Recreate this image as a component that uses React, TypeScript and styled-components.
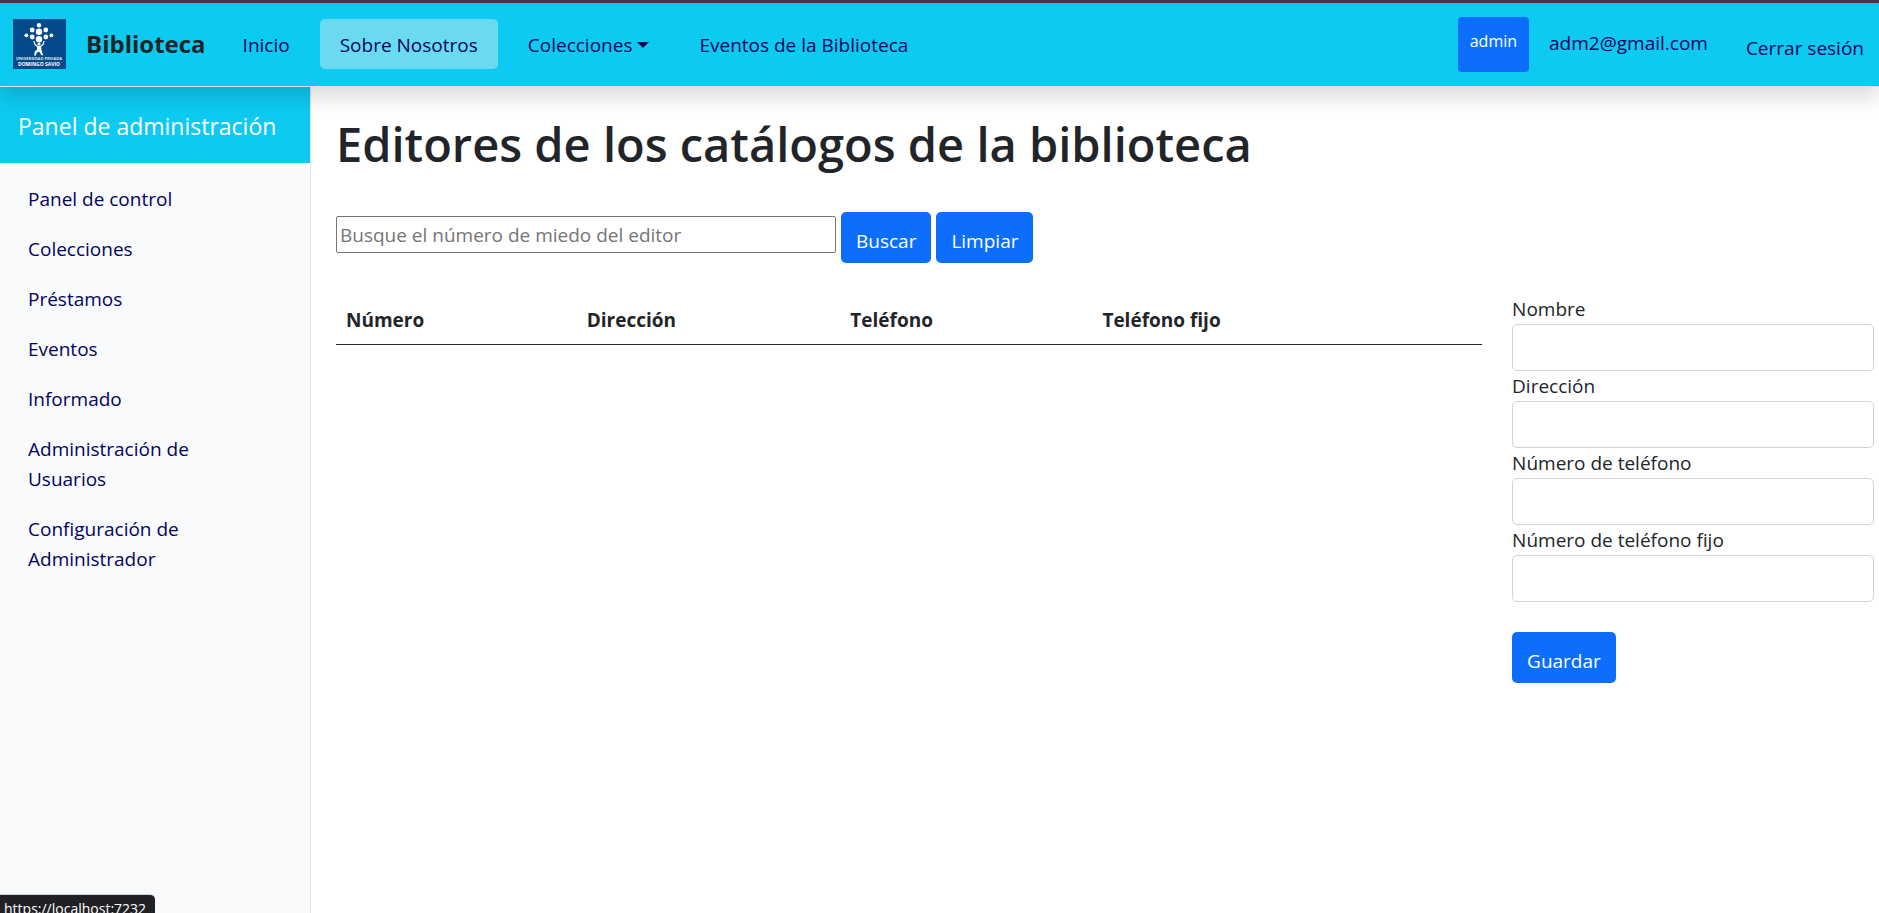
import React from "react";
import styled, { createGlobalStyle, css } from "styled-components";

const GlobalStyle = createGlobalStyle`
  *, *::before, *::after { box-sizing: border-box; }
  body {
    margin: 0;
    background: #fff;
    color: #212529;
    font: 400 19px/30px "Segoe UI", "Open Sans", "Noto Sans", sans-serif;
  }
  input, button { font: inherit; }
`;

const Page = styled.div`
  display: flex;
  flex-direction: column;
  min-height: 100vh;
`;

const TopBar = styled.header`
  position: relative;
  z-index: 1;
  display: flex;
  align-items: center;
  justify-content: space-between;
  height: 87px;
  padding: 0 15px 1px 13px;
  border-top: 3px solid #3b3c40;
  border-bottom: 1px solid #dee2e6;
  background: #0dcaf0;
  box-shadow: 0 10px 20px rgba(0, 0, 0, 0.15);
`;

const Brand = styled.a`
  display: flex;
  align-items: center;
  gap: 20px;
  margin-right: 7px;
  color: #212529;
  font-size: 24px;
  font-weight: 700;
  text-decoration: none;
`;

const TopNav = styled.nav`
  display: flex;
  align-items: center;
  gap: 10px;
`;

const NavLink = styled.a<{ $active?: boolean }>`
  display: flex;
  align-items: center;
  gap: 5px;
  padding: 11px 20px 9px;
  border-radius: 5px;
  color: #03045e;
  text-decoration: none;
  white-space: nowrap;
  ${(p) => p.$active && css`background: #6adaf0;`}
`;

const Caret = styled.span`
  border-top: 6px solid currentColor;
  border-left: 6px solid transparent;
  border-right: 6px solid transparent;
`;

const Account = styled.div`
  display: flex;
  align-items: center;
  gap: 20px;
`;

const RoleButton = styled.button`
  height: 55px;
  padding: 0 12px 7px;
  border: 0;
  border-radius: 4px;
  background: #0d6efd;
  color: #fff;
  font-size: 16px;
`;

const AccountLink = styled.a<{ $low?: boolean }>`
  padding: ${(p) => (p.$low ? "8px 0 0 18px" : "0 0 2px")};
  color: #03045e;
  text-decoration: none;
`;

const Body = styled.div`
  display: flex;
  flex: 1;
`;

const Sidebar = styled.aside`
  flex: 0 0 311px;
  border-right: 1px solid #dee2e6;
  background: #f8fafc;
`;

const SidebarTitle = styled.div`
  padding: 24px 18px 22px;
  background: #0dcaf0;
  color: #fff;
  font-size: 23px;
`;

const SidebarNav = styled.nav`
  display: flex;
  flex-direction: column;
  width: 240px;
  padding: 11px 0 0 28px;
`;

const SidebarLink = styled.a`
  padding: 10px 0;
  color: #03045e;
  text-decoration: none;
`;

const Main = styled.main`
  flex: 1;
  min-width: 0;
  padding: 27px 5px 0 25px;
`;

const Title = styled.h1`
  margin: 0 0 38px;
  font-size: 47px;
  font-weight: 600;
  line-height: 60px;
`;

const SearchForm = styled.form`
  display: flex;
  align-items: center;
  gap: 5px;
  margin-bottom: 31px;
`;

const SearchInput = styled.input`
  width: 500px;
  height: 37px;
  margin-bottom: 6px;
  padding: 0 3px;
  border: 1px solid #767676;
  border-radius: 2px;
  &::placeholder { color: #757575; opacity: 1; }
`;

const PrimaryButton = styled.button`
  height: 51px;
  padding: 7px 15px 0;
  border: 0;
  border-radius: 5px;
  background: #0d6efd;
  color: #fff;
`;

const Columns = styled.div`
  display: grid;
  grid-template-columns: minmax(0, 19fr) minmax(0, 6fr);
  gap: 30px;
  align-items: start;
`;

const Table = styled.table`
  width: 100%;
  table-layout: fixed;
  border-collapse: collapse;
`;

const Th = styled.th<{ $share: number }>`
  width: ${(p) => p.$share}%;
  padding: 11px 10px 9px;
  border-bottom: 1px solid #212529;
  font-weight: 700;
  text-align: left;
`;

const EditorForm = styled.form`
  display: flex;
  flex-direction: column;
  align-items: flex-start;
`;

const Field = styled.label`
  display: block;
  width: 100%;
`;

const FieldInput = styled.input`
  display: block;
  width: 100%;
  height: 47px;
  padding: 7px 15px;
  border: 1px solid #ced4da;
  border-radius: 5px;
`;

const Actions = styled.div`
  margin-top: 30px;
`;

const LinkStatus = styled.div`
  position: fixed;
  left: 0;
  bottom: 0;
  z-index: 2;
  height: 19px;
  padding: 0 9px 0 4px;
  overflow: hidden;
  border-top: 1px solid #d0d3d8;
  border-radius: 0 5px 0 0;
  background: #202124;
  color: #fff;
  font-size: 14px;
  line-height: 27px;
`;

const Logo = () => (
  <svg width="53" height="50" viewBox="0 0 53 50" role="img" aria-label="Universidad Privada Domingo Savio">
    <rect width="53" height="50" fill="#044a8b" />
    <g fill="#fff">
      <circle cx="26" cy="6.3" r="2.2" />
      <circle cx="19.2" cy="11" r="2.4" />
      <circle cx="26" cy="12.8" r="3.2" />
      <circle cx="32.8" cy="11" r="2.4" />
      <circle cx="13.4" cy="16.3" r="1.9" />
      <circle cx="19.2" cy="18" r="2.4" />
      <circle cx="32.8" cy="18" r="2.4" />
      <circle cx="38.4" cy="16.3" r="1.9" />
      <circle cx="26" cy="20.2" r="3.2" />
      <circle cx="26" cy="25" r="1.6" />
      <path d="M24 27h4l.6 4.6 1.6 4.6h-1.8L26 32.4l-2.4 1.4-.6 2.8h-1.8l.6-4.2 2.2-2z" />
    </g>
    <path d="M21 22.2l.8 3L25 28M31 22.2l-.8 3L27 28" fill="none" stroke="#fff" strokeWidth="1.2" />
    <g fill="#fff" textAnchor="middle" fontFamily="Open Sans, sans-serif" fontWeight="700">
      <text x="26" y="41" fontSize="4" opacity="0.85">UNIVERSIDAD PRIVADA</text>
      <text x="26" y="47" fontSize="5">DOMINGO SAVIO</text>
    </g>
  </svg>
);

const sections = [
  "Panel de control",
  "Colecciones",
  "Préstamos",
  "Eventos",
  "Informado",
  "Administración de Usuarios",
  "Configuración de Administrador",
];

const columns = [
  { label: "Número", share: 21 },
  { label: "Dirección", share: 23 },
  { label: "Teléfono", share: 22 },
  { label: "Teléfono fijo", share: 34 },
];

const fields = [
  { name: "nombre", label: "Nombre" },
  { name: "direccion", label: "Dirección" },
  { name: "telefono", label: "Número de teléfono" },
  { name: "telefonoFijo", label: "Número de teléfono fijo" },
];

export default function App() {
  return (
    <Page>
      <GlobalStyle />
      <TopBar>
        <TopNav>
          <Brand href="#">
            <Logo />
            Biblioteca
          </Brand>
          <NavLink href="#">Inicio</NavLink>
          <NavLink href="#" $active>Sobre Nosotros</NavLink>
          <NavLink href="#">
            Colecciones
            <Caret />
          </NavLink>
          <NavLink href="#">Eventos de la Biblioteca</NavLink>
        </TopNav>
        <Account>
          <RoleButton type="button">admin</RoleButton>
          <AccountLink href="#">adm2@gmail.com</AccountLink>
          <AccountLink href="#" $low>Cerrar sesión</AccountLink>
        </Account>
      </TopBar>
      <Body>
        <Sidebar>
          <SidebarTitle>Panel de administración</SidebarTitle>
          <SidebarNav>
            {sections.map((s) => (
              <SidebarLink href="#" key={s}>{s}</SidebarLink>
            ))}
          </SidebarNav>
        </Sidebar>
        <Main>
          <Title>Editores de los catálogos de la biblioteca</Title>
          <SearchForm onSubmit={(e) => e.preventDefault()}>
            <SearchInput
              type="text"
              aria-label="Buscar editor"
              placeholder="Busque el número de miedo del editor"
            />
            <PrimaryButton type="submit">Buscar</PrimaryButton>
            <PrimaryButton type="reset">Limpiar</PrimaryButton>
          </SearchForm>
          <Columns>
            <Table>
              <thead>
                <tr>
                  {columns.map((c) => (
                    <Th key={c.label} $share={c.share} scope="col">{c.label}</Th>
                  ))}
                </tr>
              </thead>
            </Table>
            <EditorForm onSubmit={(e) => e.preventDefault()}>
              {fields.map((f) => (
                <Field key={f.name}>
                  {f.label}
                  <FieldInput type="text" name={f.name} />
                </Field>
              ))}
              <Actions>
                <PrimaryButton type="submit">Guardar</PrimaryButton>
              </Actions>
            </EditorForm>
          </Columns>
        </Main>
      </Body>
      <LinkStatus>https://localhost:7232</LinkStatus>
    </Page>
  );
}
